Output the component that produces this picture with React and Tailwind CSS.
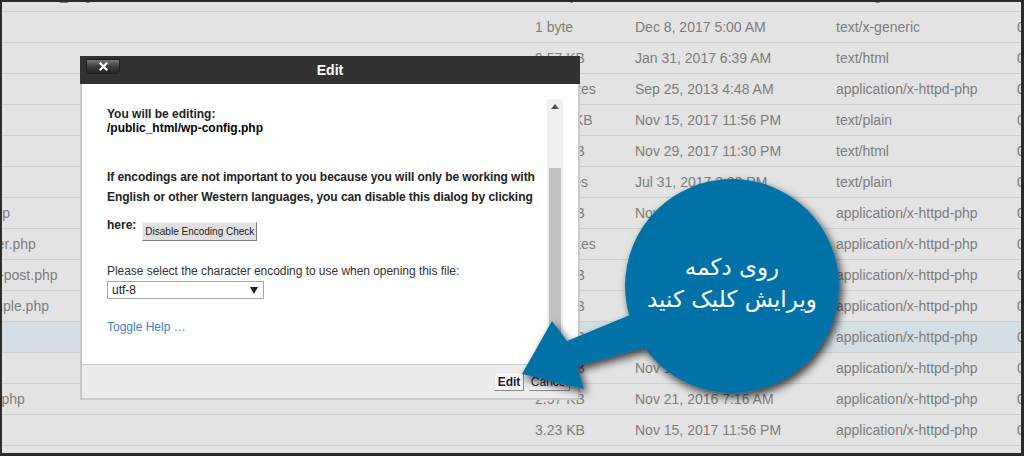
import React from "react";

const rows = [
  { name: ".htaccess", size: "1 byte", date: "Dec 8, 2017 5:00 AM", type: "text/x-generic" },
  { name: "index.html", size: "9.57 KB", date: "Jan 31, 2017 6:39 AM", type: "text/html" },
  { name: "index.php", size: "405 bytes", date: "Sep 25, 2013 4:48 AM", type: "application/x-httpd-php" },
  { name: "license.txt", size: "16.74 KB", date: "Nov 15, 2017 11:56 PM", type: "text/plain" },
  { name: "readme.html", size: "7.43 KB", date: "Nov 29, 2017 11:30 PM", type: "text/html" },
  { name: "robots.txt", size: "23 bytes", date: "Jul 31, 2017 3:29 PM", type: "text/plain" },
  { name: "wp-activate.php", size: "5.33 KB", date: "Nov 15, 2017 11:56 PM", type: "application/x-httpd-php" },
  { name: "wp-blog-header.php", size: "364 bytes", date: "Dec 19, 2015 11:20 AM", type: "application/x-httpd-php" },
  { name: "wp-comments-post.php", size: "1.59 KB", date: "May 24, 2016 8:56 AM", type: "application/x-httpd-php" },
  { name: "wp-config-sample.php", size: "2.79 KB", date: "Nov 21, 2016 7:16 AM", type: "application/x-httpd-php" },
  { name: "wp-config.php", size: "3.21 KB", date: "Dec 8, 2017 5:00 AM", type: "application/x-httpd-php", hl: true },
  { name: "wp-cron.php", size: "3.59 KB", date: "Nov 15, 2017 11:56 PM", type: "application/x-httpd-php" },
  { name: "wp-links-opml.php", size: "2.57 KB", date: "Nov 21, 2016 7:16 AM", type: "application/x-httpd-php" },
  { name: "wp-load.php", size: "3.23 KB", date: "Nov 15, 2017 11:56 PM", type: "application/x-httpd-php" },
];

function Row({ name, size, date, type, hl }) {
  return (
    <div
      className={
        hl
          ? "flex h-[31px] shrink-0 items-center border-b border-[#cfcfcf] bg-[#d4dee5] text-[14px] text-[#7d7d7d] whitespace-nowrap"
          : "flex h-[31px] shrink-0 items-center border-b border-[#cfcfcf] text-[14px] text-[#7d7d7d] whitespace-nowrap"
      }
    >
      <div className="w-[533px] shrink-0 overflow-hidden">
        <div className="-ml-[90px]">{name}</div>
      </div>
      <div className="w-[100px] shrink-0">{size}</div>
      <div className="w-[201px] shrink-0">{date}</div>
      <div className="w-[181px] shrink-0">{type}</div>
      <div className="w-[40px] shrink-0">0644</div>
    </div>
  );
}

export default function App() {
  return (
    <div className="relative h-[456px] w-[1024px] overflow-hidden border-t-2 border-l-2 border-r-[3px] border-b-[3px] border-[#2b2b2b] bg-[#e3e3e3] font-['Liberation_Sans',Arial,sans-serif]">
      {/* background file table */}
      <div className="flex flex-col">
        <div className="flex h-[10px] shrink-0 items-start overflow-hidden border-b border-[#cfcfcf] text-[14px] leading-[16px] text-[#7d7d7d] whitespace-nowrap">
          <div className="w-[533px] shrink-0 -mt-[15px] pl-[48px]">
            <span>w_</span>
            <span className="ml-[16px]">g</span>
          </div>
          <div className="w-[100px] shrink-0 -mt-[15px]">742 bytes</div>
          <div className="w-[201px] shrink-0 -mt-[15px]">Dec 12, 2017 3:12 PM</div>
          <div className="w-[181px] shrink-0 -mt-[15px]">text/x-generic</div>
        </div>
        {rows.map((r, i) => (
          <Row key={i} {...r} />
        ))}
      </div>

      {/* Edit dialog */}
      <div className="absolute left-[78px] top-[54px] w-[500px]">
        <div className="relative flex h-[28px] items-center justify-center bg-[#323232]">
          <div className="absolute left-[6px] top-[3px] flex h-[15px] w-[34px] items-center justify-center rounded-b-[4px] border border-[#1a1f1f] bg-linear-to-b from-[#7a7a7a] via-[#3e3e3e] to-[#262626]">
            <svg width="9" height="9" viewBox="0 0 9 9">
              <path d="M1.5 1.5 L7.5 7.5 M7.5 1.5 L1.5 7.5" stroke="#ffffff" strokeWidth="2.2" strokeLinecap="square" />
            </svg>
          </div>
          <span className="text-[14px] font-bold text-white">Edit</span>
        </div>

        <div className="flex h-[280px] border-x-2 border-[#c9c9c9] bg-white">
          <div className="flex-1 pl-[25px] pt-[23px] text-[12px] leading-[14px]">
            <div className="font-bold text-[#222]">You will be editing:</div>
            <div className="font-bold text-black">/public_html/wp-config.php</div>
            <div className="mt-[32px] font-bold leading-[20px] tracking-[-0.065px] text-[#222]">
              If encodings are not important to you because you will only be working with
              <br />
              English or other Western languages, you can disable this dialog by clicking
            </div>
            <div className="mt-[8px] flex items-start">
              <span className="font-bold leading-[20px] text-[#222]">here:</span>
              <div className="ml-[6px] mt-[7px] flex h-[19px] w-[115px] items-center justify-center border border-t-[#f2f2f2] border-l-[#f2f2f2] border-r-[#7a7a7a] border-b-[#7a7a7a] bg-[#e1e1e1] text-[10px] text-[#222]">
                Disable Encoding Check
              </div>
            </div>
            <div className="mt-[23px] tracking-[-0.04px] text-[#333]">
              Please select the character encoding to use when opening this file:
            </div>
            <div className="mt-[3px] flex h-[18px] w-[157px] items-center justify-between border border-[#a6a6a6] pl-[4px] pr-[5px] text-[12px] text-[#222]">
              <span>utf-8</span>
              <svg width="8" height="7" viewBox="0 0 8 7">
                <path d="M0 0 L8 0 L4 7 Z" fill="#222" />
              </svg>
            </div>
            <div className="mt-[21px] text-[#3d80cc]">Toggle Help …</div>
          </div>
          <div className="mr-[15px] mt-[15px] flex w-[16px] flex-col items-center bg-[#f0f0f0]">
            <svg className="mt-[5px]" width="8" height="5" viewBox="0 0 8 5">
              <path d="M0 5 L4 0 L8 5 Z" fill="#505050" />
            </svg>
            <div className="mt-[59px] h-[190px] w-[12px] bg-[#c1c1c1]" />
          </div>
        </div>

        <div className="flex h-[36px] items-start justify-end gap-[5px] border-x-2 border-b-2 border-t border-[#c9c9c9] bg-[#ececec] pr-[8px] pt-[7px]">
          <div className="flex h-[19px] w-[30px] items-center justify-center border border-t-[#e6e6e6] border-l-[#e6e6e6] border-r-[#8a8a8a] border-b-[#8a8a8a] bg-[#f6f6f6] text-[12px] font-bold text-[#1d1d3b]">
            Edit
          </div>
          <div className="flex h-[19px] w-[41px] items-center justify-center border border-t-[#e6e6e6] border-l-[#e6e6e6] border-r-[#8a8a8a] border-b-[#8a8a8a] bg-[#f6f6f6] text-[12px] text-[#1d1d3b]">
            Cancel
          </div>
        </div>
      </div>

      {/* callout graphic */}
      <svg className="absolute left-0 top-0" width="1019" height="451" viewBox="2 2 1019 451">
        <defs>
          <filter id="sh" x="-20%" y="-20%" width="140%" height="140%">
            <feDropShadow dx="3" dy="4" stdDeviation="4" floodColor="#000" floodOpacity="0.75" />
          </filter>
        </defs>
        <g filter="url(#sh)" fill="#0272a8">
          <polygon points="522,374 552,321 567,341 642,310 654,345 577,366 584,389" />
          <circle cx="732" cy="286" r="107" />
        </g>
      </svg>
      <div
        dir="rtl"
        className="absolute left-[623px] top-[177px] flex h-[214px] w-[214px] flex-col items-center justify-center pb-[7px] text-center font-['DejaVu_Sans',sans-serif] text-[23px] leading-[32px] text-white"
      >
        <div>روی دکمه</div>
        <div>ویرایش کلیک کنید</div>
      </div>
    </div>
  );
}
